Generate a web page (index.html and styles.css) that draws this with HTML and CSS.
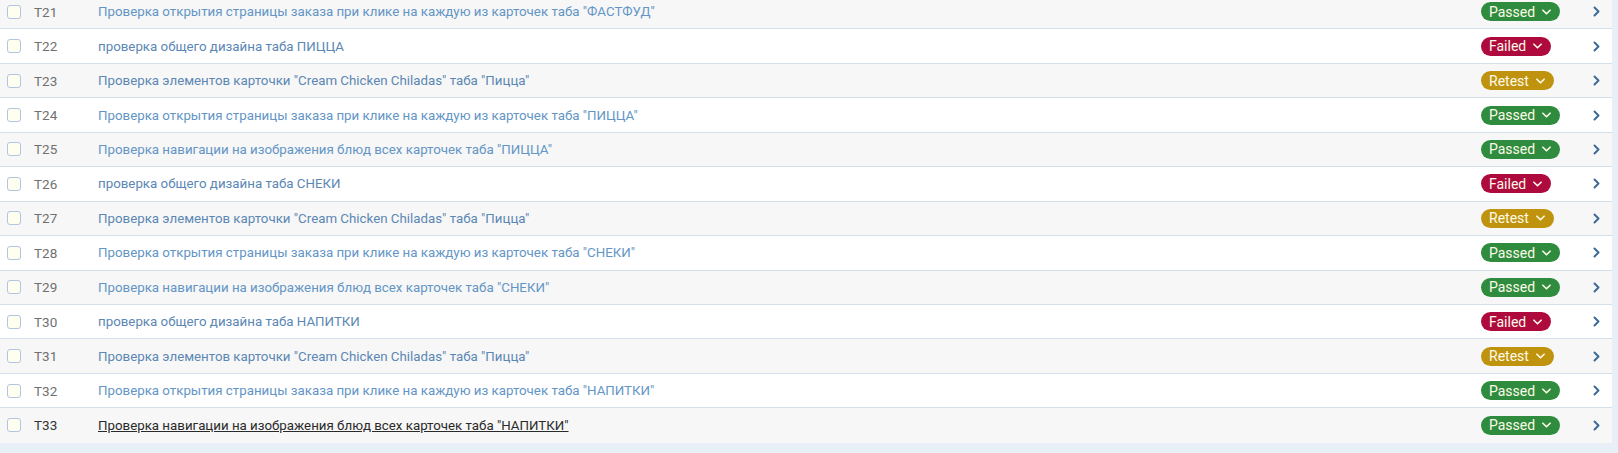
FILE: index.html
```html
<!DOCTYPE html>
<html>
<head>
<meta charset="utf-8">
<link rel="stylesheet" href="styles.css">
</head>
<body>
<div class="list">
  <div class="row odd"><span class="cb"></span><span class="id">T21</span><a class="title">Проверка открытия страницы заказа при клике на каждую из карточек таба "ФАСТФУД"</a><span class="badge passed">Passed<svg class="dd" viewBox="0 0 10 6"><path d="M1 1l4 4 4-4"/></svg></span><svg class="arr" viewBox="0 0 7 11"><path d="M1.5 1.5l4 4-4 4"/></svg></div>
  <div class="row"><span class="cb"></span><span class="id">T22</span><a class="title dim">проверка общего дизайна таба ПИЦЦА</a><span class="badge failed">Failed<svg class="dd" viewBox="0 0 10 6"><path d="M1 1l4 4 4-4"/></svg></span><svg class="arr" viewBox="0 0 7 11"><path d="M1.5 1.5l4 4-4 4"/></svg></div>
  <div class="row odd"><span class="cb"></span><span class="id">T23</span><a class="title dim">Проверка элементов карточки "Cream Chicken Chiladas" таба "Пицца"</a><span class="badge retest">Retest<svg class="dd" viewBox="0 0 10 6"><path d="M1 1l4 4 4-4"/></svg></span><svg class="arr" viewBox="0 0 7 11"><path d="M1.5 1.5l4 4-4 4"/></svg></div>
  <div class="row"><span class="cb"></span><span class="id">T24</span><a class="title">Проверка открытия страницы заказа при клике на каждую из карточек таба "ПИЦЦА"</a><span class="badge passed">Passed<svg class="dd" viewBox="0 0 10 6"><path d="M1 1l4 4 4-4"/></svg></span><svg class="arr" viewBox="0 0 7 11"><path d="M1.5 1.5l4 4-4 4"/></svg></div>
  <div class="row odd"><span class="cb"></span><span class="id">T25</span><a class="title">Проверка навигации на изображения блюд всех карточек таба "ПИЦЦА"</a><span class="badge passed">Passed<svg class="dd" viewBox="0 0 10 6"><path d="M1 1l4 4 4-4"/></svg></span><svg class="arr" viewBox="0 0 7 11"><path d="M1.5 1.5l4 4-4 4"/></svg></div>
  <div class="row"><span class="cb"></span><span class="id">T26</span><a class="title dim">проверка общего дизайна таба СНЕКИ</a><span class="badge failed">Failed<svg class="dd" viewBox="0 0 10 6"><path d="M1 1l4 4 4-4"/></svg></span><svg class="arr" viewBox="0 0 7 11"><path d="M1.5 1.5l4 4-4 4"/></svg></div>
  <div class="row odd"><span class="cb"></span><span class="id">T27</span><a class="title dim">Проверка элементов карточки "Cream Chicken Chiladas" таба "Пицца"</a><span class="badge retest">Retest<svg class="dd" viewBox="0 0 10 6"><path d="M1 1l4 4 4-4"/></svg></span><svg class="arr" viewBox="0 0 7 11"><path d="M1.5 1.5l4 4-4 4"/></svg></div>
  <div class="row"><span class="cb"></span><span class="id">T28</span><a class="title">Проверка открытия страницы заказа при клике на каждую из карточек таба "СНЕКИ"</a><span class="badge passed">Passed<svg class="dd" viewBox="0 0 10 6"><path d="M1 1l4 4 4-4"/></svg></span><svg class="arr" viewBox="0 0 7 11"><path d="M1.5 1.5l4 4-4 4"/></svg></div>
  <div class="row odd"><span class="cb"></span><span class="id">T29</span><a class="title">Проверка навигации на изображения блюд всех карточек таба "СНЕКИ"</a><span class="badge passed">Passed<svg class="dd" viewBox="0 0 10 6"><path d="M1 1l4 4 4-4"/></svg></span><svg class="arr" viewBox="0 0 7 11"><path d="M1.5 1.5l4 4-4 4"/></svg></div>
  <div class="row"><span class="cb"></span><span class="id">T30</span><a class="title dim">проверка общего дизайна таба НАПИТКИ</a><span class="badge failed">Failed<svg class="dd" viewBox="0 0 10 6"><path d="M1 1l4 4 4-4"/></svg></span><svg class="arr" viewBox="0 0 7 11"><path d="M1.5 1.5l4 4-4 4"/></svg></div>
  <div class="row odd"><span class="cb"></span><span class="id">T31</span><a class="title dim">Проверка элементов карточки "Cream Chicken Chiladas" таба "Пицца"</a><span class="badge retest">Retest<svg class="dd" viewBox="0 0 10 6"><path d="M1 1l4 4 4-4"/></svg></span><svg class="arr" viewBox="0 0 7 11"><path d="M1.5 1.5l4 4-4 4"/></svg></div>
  <div class="row"><span class="cb"></span><span class="id">T32</span><a class="title">Проверка открытия страницы заказа при клике на каждую из карточек таба "НАПИТКИ"</a><span class="badge passed">Passed<svg class="dd" viewBox="0 0 10 6"><path d="M1 1l4 4 4-4"/></svg></span><svg class="arr" viewBox="0 0 7 11"><path d="M1.5 1.5l4 4-4 4"/></svg></div>
  <div class="row odd last"><span class="cb"></span><span class="id dark">T33</span><a class="title hover">Проверка навигации на изображения блюд всех карточек таба "НАПИТКИ"</a><span class="badge passed">Passed<svg class="dd" viewBox="0 0 10 6"><path d="M1 1l4 4 4-4"/></svg></span><svg class="arr" viewBox="0 0 7 11"><path d="M1.5 1.5l4 4-4 4"/></svg></div>
</div>
</body>
</html>
```
FILE: styles.css
```css
html, body {
  margin: 0;
  padding: 0;
  background: #e9eff6;
  font-family: Roboto, "Noto Sans", Arial, sans-serif;
  overflow: hidden;
}
.list {
  width: 1612px;
  margin-top: -5px;
}
.row {
  display: grid;
  grid-template-columns: 27px 64px 1fr 100px 31px;
  align-items: center;
  box-sizing: border-box;
  height: 34.45px;
  padding-left: 7px;
  background: #ffffff;
  border-bottom: 1px solid #d3dfeb;
}
.row.odd { background: #f7f7f7; }
.row.last { border-bottom: none; }
.cb {
  width: 14px;
  height: 14px;
  box-sizing: border-box;
  border: 1px solid #b3c3e3;
  border-radius: 3px;
  background: #fffff0;
}
.id {
  font-size: 13.5px;
  color: #707070;
}
.id.dark { color: #333; }
.title {
  font-size: 13.3px;
  color: #6395c6;
  white-space: nowrap;
}
.title.dim { color: #5b87b4; }
.title.hover {
  color: #2a2a2a;
  text-decoration: underline;
}
.badge {
  justify-self: start;
  display: inline-flex;
  align-items: center;
  gap: 7px;
  height: 19px;
  padding: 0 9px 0 8px;
  border-radius: 10px;
  font-size: 14px;
  color: #fdfbe8;
}
.badge.passed { background: #2f8b3e; }
.badge.failed { background: #ae0a3e; }
.badge.retest { background: #c0930e; }
.dd {
  width: 9px;
  height: 6px;
  fill: none;
  stroke: #fdfbe8;
  stroke-width: 1.8;
  stroke-linecap: round;
  stroke-linejoin: round;
}
.arr {
  justify-self: center;
  width: 7px;
  height: 11px;
  fill: none;
  stroke: #3e6b96;
  stroke-width: 2;
  stroke-linecap: round;
  stroke-linejoin: round;
}
```
